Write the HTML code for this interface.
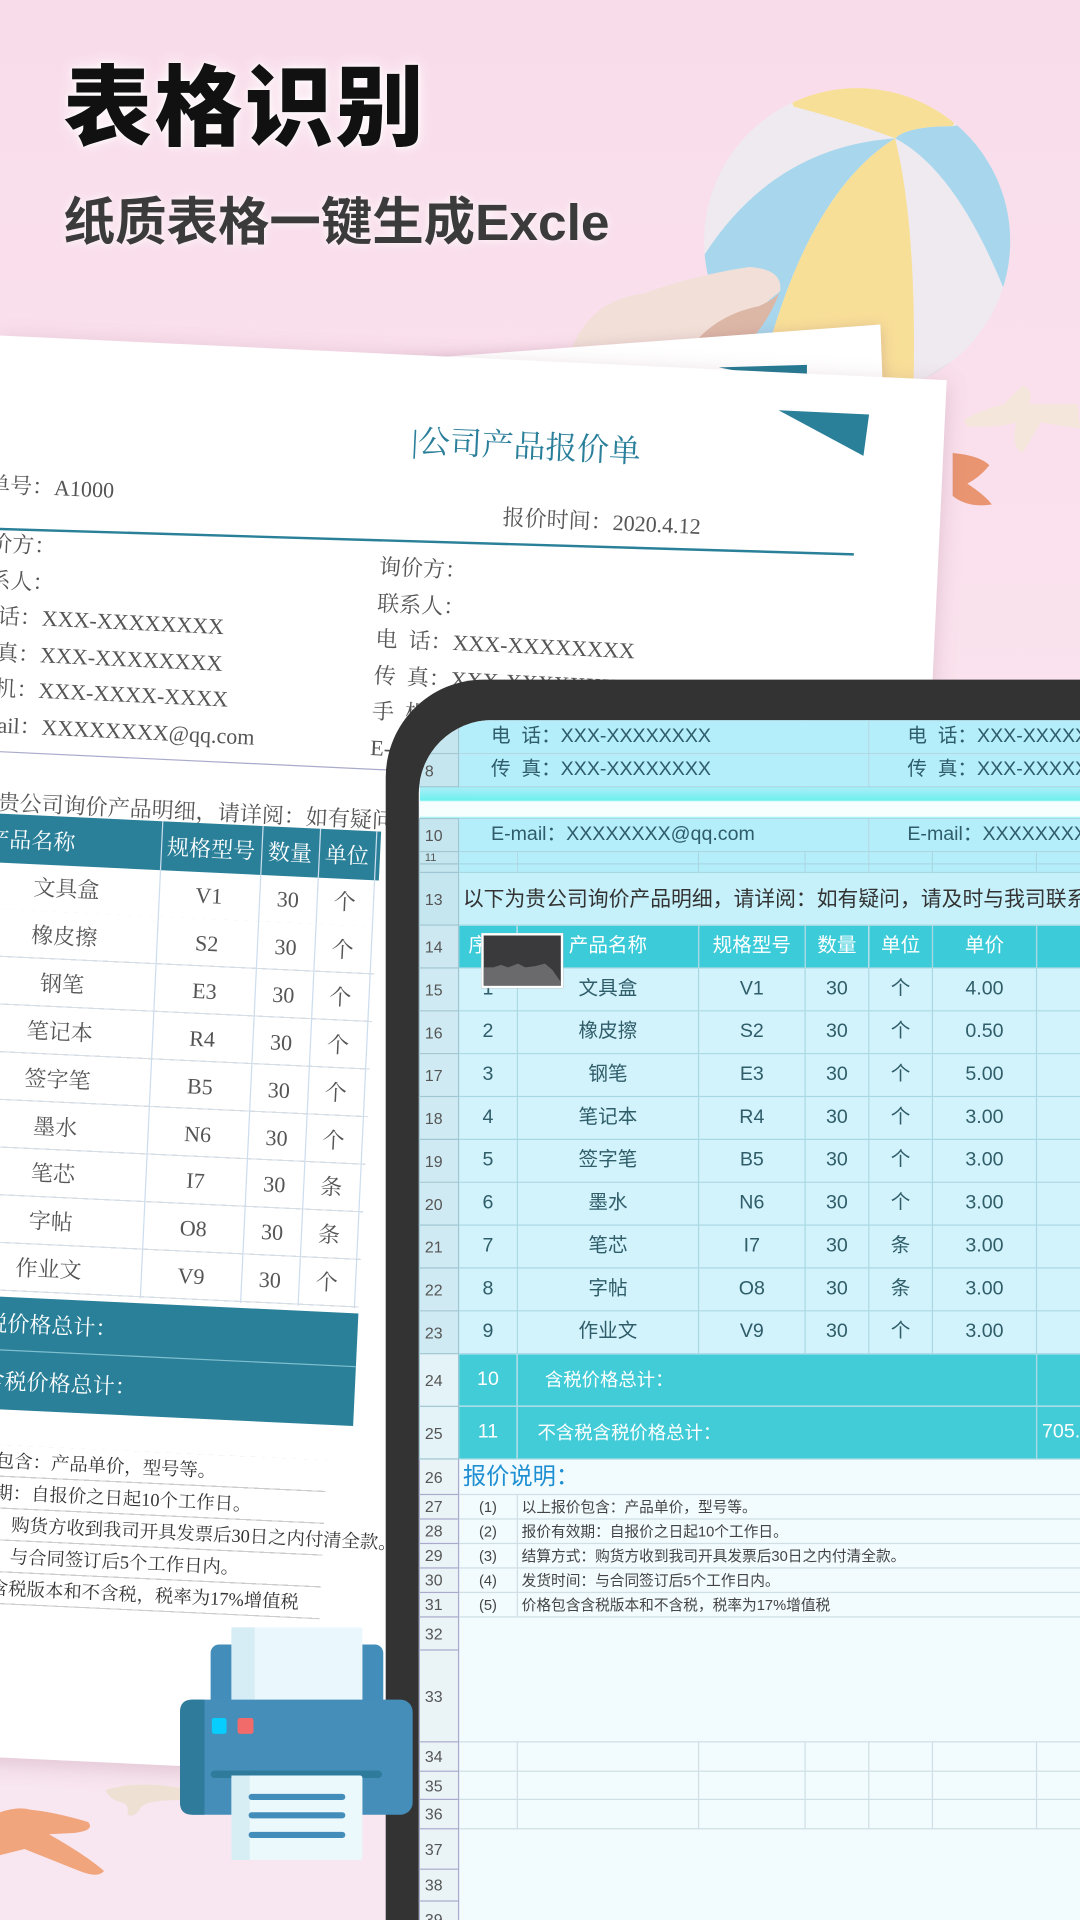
<!DOCTYPE html>
<html><head><meta charset="utf-8">
<style>
*{margin:0;padding:0;box-sizing:border-box}
html,body{width:1080px;height:1920px;overflow:hidden}
body{background:#f8e1ec}
#w{position:absolute;left:0;top:0;width:882px;height:1568px;transform:scale(1.22449);transform-origin:0 0;overflow:hidden;
background:linear-gradient(180deg,#f9dcea 0%,#fae3ee 40%,#f8e6f0 100%);font-family:"Liberation Sans","Noto Sans CJK SC",sans-serif}
.a{position:absolute}
.t1{left:52px;top:44px;font-size:72px;font-weight:900;color:#111;letter-spacing:2px;text-shadow:0 0 12px #fff,0 0 4px #fff;line-height:90px}
.t2{left:52px;top:152px;font-size:42px;font-weight:700;color:#3b3b3b;line-height:60px;text-shadow:0 0 8px #fff}
.paper{background:#fff;box-shadow:0 4px 18px rgba(150,90,120,.25)}
.ps{font-family:"Liberation Serif","Noto Serif CJK SC",serif;color:#555;font-size:18px;white-space:nowrap;line-height:22px}
#frame{left:315px;top:555px;width:720px;height:1013px;background:#333;border-radius:80px 80px 0 0}
#scr{left:342px;top:588px;width:540px;height:980px;border-radius:60px 0 0 0;overflow:hidden;background:#f2fbfe}
table{border-collapse:collapse;table-layout:fixed;width:620px;font-size:16px;color:#2f5d6a}
td{border:1px solid #a8d8e4;padding:0;white-space:nowrap;overflow:hidden;text-align:center;line-height:1}
td.n{background:#d3ecf3;color:#555;font-size:13px;text-align:left;padding-left:4px;border-color:#9fc6d2}
.cy td{background:#b4eefa}
.cy td.n{background:#c5e6ef}
.d td{background:#d2f3fb}
.d td.n{background:#cfeaf2}
.h td{background:#3ccbd8;color:#fff}
.h td.n{background:#cde8f0;color:#555}
.tt td{background:#42ccd7;color:#fff}
.tt td.n{background:#e4f3f7;color:#555}
.lo td{background:#f2fbfe;border-color:#cfdfe5;color:#444}
.lo td.n{background:#eaf4f7;color:#555;border-color:#aac}
.l{text-align:left}
</style></head><body><div id="w">

<svg class="a" style="left:0;top:0" width="882" height="440" viewBox="0 0 882 440">
<defs><clipPath id="bc"><circle cx="700" cy="197" r="125"/></clipPath></defs>
<circle cx="700" cy="197" r="125" fill="#efeaef"/>
<g clip-path="url(#bc)">
<path d="M731 113 Q631 120 574 210 L540 300 L631 340 L631 272 Q667 153 731 113Z" fill="#a8d7ed"/>
<path d="M731 113 Q667 153 631 272 L630 340 L746 340 L746 318 Q749 185 731 113Z" fill="#f8df98"/>
<path d="M731 113 Q741 103 778 103 L870 90 L870 260 L821 239 Q781 139 731 113Z" fill="#a8d7ed"/>
<path d="M731 113 Q700 101 648 87 L640 60 L800 60 L778 103 Q741 103 731 113Z" fill="#f8df98"/>
<path d="M746 318 Q760 300 830 270 L840 340 L740 340Z" fill="#e2dce6" opacity=".7"/>
</g>
<path d="M465 290 Q480 245 525 240 Q565 225 612 218 Q640 220 637 238 Q610 258 590 290Z" fill="#f2e0d8"/>
<path d="M560 290 Q580 258 620 250 Q635 243 637 238 Q625 270 600 290Z" fill="#dcb7a6"/>
<path d="M787 343 Q800 335 820 330 L835 315 Q845 318 840 330 L880 330 L882 350 L850 345 L835 370 Q825 365 830 345 Q810 350 790 348Z" fill="#f5e6dc"/>
<path d="M778 370 Q800 372 808 380 Q800 390 790 395 Q805 405 810 412 Q790 415 778 405Z" fill="#e99572"/>
</svg>

<div class="a t1">表格识别</div>
<div class="a t2">纸质表格一键生成Excle</div>

<svg class="a" style="left:0;top:0" width="882" height="600">
<polygon points="300,296 719,265 730,560 300,580" fill="#fff" style="filter:drop-shadow(0 2px 6px rgba(150,90,120,.3))"/>
<polygon points="587,300 659,298 659,314" fill="#227a93"/>
</svg>

<div class="a paper" style="left:0;top:274px;width:774px;height:1160px;transform:rotate(2.7deg);transform-origin:0 0">
  <div class="a ps" style="left:340px;top:56px;font-size:26px;color:#2a7f9a;line-height:30px">|公司产品报价单</div>
  <svg class="a" style="left:630px;top:24px" width="90" height="50"><polygon points="8,7 82,7 79,41" fill="#2a8099"/></svg>
  <div class="a ps" style="left:-40px;top:111px">报价单号：A1000</div>
  <div class="a ps" style="left:417px;top:118px">报价时间：2020.4.12</div>
  <div class="a" style="left:-20px;top:151px;width:725px;height:2px;background:#2a8099;transform:rotate(-1deg)"></div>
  <div class="a ps" style="left:-18px;top:156px;line-height:29.5px">询价方：<br>联系人：<br>电&nbsp;&nbsp;话：XXX-XXXXXXXX<br>传&nbsp;&nbsp;真：XXX-XXXXXXXX<br>手&nbsp;&nbsp;机：XXX-XXXX-XXXX<br>E-mail：XXXXXXXX@qq.com</div>
  <div class="a ps" style="left:318px;top:160px;line-height:29.5px">询价方：<br>联系人：<br>电&nbsp;&nbsp;话：XXX-XXXXXXXX<br>传&nbsp;&nbsp;真：XXX-XXXXXXXX<br>手&nbsp;&nbsp;机：XXX-XXXX-XXXX<br>E-mail：XXXXXXXX@qq.com</div>
  <div class="a" style="left:-20px;top:339px;width:360px;height:1px;background:#aac"></div>
  <div class="a ps" style="left:-38px;top:370px">以下为贵公司询价产品明细，请详阅：如有疑问，请及时与我司联系</div>
  <div class="a" style="left:-30px;top:390px;width:360px;height:40px;background:#2a8099"></div>
  <div class="a ps" style="left:-30px;top:400px;width:360px;color:#fff">
    <span class="a" style="left:30px;width:90px;text-align:center">产品名称</span>
    <span class="a" style="left:181px;width:82px;text-align:center">规格型号</span>
    <span class="a" style="left:263px;width:47px;text-align:center">数量</span>
    <span class="a" style="left:310px;width:46px;text-align:center">单位</span>
  </div>
  <div class="a" style="left:151px;top:390px;width:1px;height:390px;background:#cde"></div>
  <div class="a" style="left:233px;top:390px;width:1px;height:390px;background:#cde"></div>
  <div class="a" style="left:280px;top:390px;width:1px;height:390px;background:#cde"></div>
  <div class="a" style="left:326px;top:390px;width:1px;height:390px;background:#cde"></div>
  <div class="a ps" style="left:0;top:430px;width:330px;line-height:38.9px">
    <div class="a" style="left:0;width:151px;text-align:center">文具盒<br>橡皮擦<br>钢笔<br>笔记本<br>签字笔<br>墨水<br>笔芯<br>字帖<br>作业文</div>
    <div class="a" style="left:151px;width:82px;text-align:center">V1<br>S2<br>E3<br>R4<br>B5<br>N6<br>I7<br>O8<br>V9</div>
    <div class="a" style="left:233px;width:47px;text-align:center">30<br>30<br>30<br>30<br>30<br>30<br>30<br>30<br>30</div>
    <div class="a" style="left:280px;width:46px;text-align:center">个<br>个<br>个<br>个<br>个<br>个<br>条<br>条<br>个</div>
  </div>
  <div class="a" style="left:-30px;top:468px;width:360px;height:312px;background:repeating-linear-gradient(180deg,transparent 0,transparent 37.9px,#d5dde5 37.9px,#d5dde5 38.9px)"></div>
  <div class="a" style="left:-30px;top:784px;width:360px;height:92px;background:#2a8099"></div>
  <div class="a" style="left:-30px;top:827px;width:360px;height:1px;background:#7fc0d0"></div>
  <div class="a ps" style="left:-10px;top:795px;color:#fff">不含税价格总计：</div>
  <div class="a ps" style="left:-28px;top:842px;color:#fff">不含税含税价格总计：</div>
  <div class="a ps" style="left:-68px;top:878px;color:#2a8fc9;font-size:22px;line-height:26px">报价说明：</div>
  <div class="a ps" style="left:-20px;top:906px;font-size:15px;line-height:26px;color:#333">以上报价包含：产品单价，型号等。<br>报价有效期：自报价之日起10个工作日。<br>结算方式：购货方收到我司开具发票后30日之内付清全款。<br>发货时间：与合同签订后5个工作日内。<br>价格包含含税版本和不含税，税率为17%增值税</div>
  <div class="a" style="left:-20px;top:905px;width:330px;height:130px;background:repeating-linear-gradient(180deg,transparent 0,transparent 25px,#ccc 25px,#ccc 26px)"></div>
</div>

<svg class="a" style="left:0;top:1440px" width="160" height="100">
<path d="M86 22 Q110 14 147 20 L147 30 Q120 30 115 36 Q110 45 104 42 Q106 34 100 32 Q90 30 86 22Z" fill="#efe0d4"/>
<path d="M0 40 Q15 35 25 38 Q45 40 72 48 Q78 55 60 57 L40 58 Q70 75 85 88 Q80 94 65 88 Q40 78 20 70 L0 75Z" fill="#f0a57c"/>
</svg>

<div class="a" id="frame"></div>
<div class="a" id="scr">
<table>
<colgroup><col style="width:32px"><col style="width:48px"><col style="width:148px"><col style="width:87px"><col style="width:52px"><col style="width:52px"><col style="width:85px"><col style="width:116px"></colgroup>
<tr class="cy" style="height:27px"><td class="n"></td><td colspan="4" class="l" style="padding-left:26px">电&nbsp;&nbsp;话：XXX-XXXXXXXX</td><td colspan="3" class="l" style="padding-left:31px">电&nbsp;&nbsp;话：XXX-XXXXXXXX</td></tr>
<tr class="cy" style="height:27px"><td class="n">8</td><td colspan="4" class="l" style="padding-left:26px">传&nbsp;&nbsp;真：XXX-XXXXXXXX</td><td colspan="3" class="l" style="padding-left:31px">传&nbsp;&nbsp;真：XXX-XXXXXXXX</td></tr>
<tr style="height:26px"><td colspan="8" style="border:0;background:linear-gradient(180deg,#a8eef8 0%,#6ff0ee 40%,#f6fffe 45%,#f6fffe 92%,#6ff0ee 100%)"></td></tr>
<tr class="cy" style="height:27px"><td class="n">10</td><td colspan="4" class="l" style="padding-left:26px">E-mail：XXXXXXXX@qq.com</td><td colspan="3" class="l" style="padding-left:31px">E-mail：XXXXXXXX@qq.com</td></tr>
<tr class="cy" style="height:8px"><td class="n" style="font-size:9px">11</td><td></td><td></td><td></td><td></td><td></td><td></td><td></td></tr>
<tr class="cy" style="height:7px"><td class="n"></td><td></td><td></td><td></td><td></td><td></td><td></td><td></td></tr>
<tr class="cy" style="height:43px"><td class="n">13</td><td colspan="7" class="l" style="padding-left:3px;font-size:17px;color:#333;background:#c6f1fa">以下为贵公司询价产品明细，请详阅：如有疑问，请及时与我司联系，谢谢！</td></tr>
<tr class="h" style="height:35px"><td class="n">14</td><td>序号</td><td>产品名称</td><td>规格型号</td><td>数量</td><td>单位</td><td>单价</td><td></td></tr>
<tr class="d" style="height:35px"><td class="n">15</td><td>1</td><td>文具盒</td><td>V1</td><td>30</td><td>个</td><td>4.00</td><td></td></tr>
<tr class="d" style="height:35px"><td class="n">16</td><td>2</td><td>橡皮擦</td><td>S2</td><td>30</td><td>个</td><td>0.50</td><td></td></tr>
<tr class="d" style="height:35px"><td class="n">17</td><td>3</td><td>钢笔</td><td>E3</td><td>30</td><td>个</td><td>5.00</td><td></td></tr>
<tr class="d" style="height:35px"><td class="n">18</td><td>4</td><td>笔记本</td><td>R4</td><td>30</td><td>个</td><td>3.00</td><td></td></tr>
<tr class="d" style="height:35px"><td class="n">19</td><td>5</td><td>签字笔</td><td>B5</td><td>30</td><td>个</td><td>3.00</td><td></td></tr>
<tr class="d" style="height:35px"><td class="n">20</td><td>6</td><td>墨水</td><td>N6</td><td>30</td><td>个</td><td>3.00</td><td></td></tr>
<tr class="d" style="height:35px"><td class="n">21</td><td>7</td><td>笔芯</td><td>I7</td><td>30</td><td>条</td><td>3.00</td><td></td></tr>
<tr class="d" style="height:35px"><td class="n">22</td><td>8</td><td>字帖</td><td>O8</td><td>30</td><td>条</td><td>3.00</td><td></td></tr>
<tr class="d" style="height:35px"><td class="n">23</td><td>9</td><td>作业文</td><td>V9</td><td>30</td><td>个</td><td>3.00</td><td></td></tr>
<tr class="tt" style="height:43px"><td class="n">24</td><td>10</td><td colspan="5" class="l" style="padding-left:22px;font-size:15px">含税价格总计：</td><td></td></tr>
<tr class="tt" style="height:43px"><td class="n">25</td><td>11</td><td colspan="5" class="l" style="padding-left:16px;font-size:15px">不含税含税价格总计：</td><td class="l" style="padding-left:4px">705.</td></tr>
<tr class="lo" style="height:29px"><td class="n">26</td><td colspan="7" class="l" style="padding-left:3px;font-size:19px;color:#1d8fd2">报价说明：</td></tr>
<tr class="lo" style="height:20px"><td class="n">27</td><td style="font-size:12px">(1)</td><td colspan="6" class="l" style="padding-left:3px;font-size:12px">以上报价包含：产品单价，型号等。</td></tr>
<tr class="lo" style="height:20px"><td class="n">28</td><td style="font-size:12px">(2)</td><td colspan="6" class="l" style="padding-left:3px;font-size:12px">报价有效期：自报价之日起10个工作日。</td></tr>
<tr class="lo" style="height:20px"><td class="n">29</td><td style="font-size:12px">(3)</td><td colspan="6" class="l" style="padding-left:3px;font-size:12px">结算方式：购货方收到我司开具发票后30日之内付清全款。</td></tr>
<tr class="lo" style="height:20px"><td class="n">30</td><td style="font-size:12px">(4)</td><td colspan="6" class="l" style="padding-left:3px;font-size:12px">发货时间：与合同签订后5个工作日内。</td></tr>
<tr class="lo" style="height:20px"><td class="n">31</td><td style="font-size:12px">(5)</td><td colspan="6" class="l" style="padding-left:3px;font-size:12px">价格包含含税版本和不含税，税率为17%增值税</td></tr>
<tr class="lo" style="height:27px"><td class="n">32</td><td colspan="7" style="border-bottom:0"></td></tr>
<tr class="lo" style="height:75px"><td class="n">33</td><td colspan="7" style="border-top:0"></td></tr>
<tr class="lo" style="height:24px"><td class="n">34</td><td></td><td></td><td></td><td></td><td></td><td></td><td></td></tr>
<tr class="lo" style="height:23px"><td class="n">35</td><td></td><td></td><td></td><td></td><td></td><td></td><td></td></tr>
<tr class="lo" style="height:24px"><td class="n">36</td><td></td><td></td><td></td><td></td><td></td><td></td><td></td></tr>
<tr class="lo" style="height:33px"><td class="n">37</td><td colspan="7" style="border-bottom:0"></td></tr>
<tr class="lo" style="height:26px"><td class="n">38</td><td colspan="7" style="border:0"></td></tr>
<tr class="lo" style="height:30px"><td class="n">39</td><td colspan="7" style="border:0"></td></tr>
</table>
<div class="a" style="left:51px;top:174px;width:67px;height:45px;background:#3a393c;border:2px solid #fff">
  <svg width="63" height="41" style="position:absolute;left:0;top:0"><path d="M0 26 L8 26 L14 24 L20 26 L28 23 L34 26 L42 25 L50 23 L56 28 L63 38 L63 41 L0 41Z" fill="#6a6a6c"/></svg>
</div>
</div>

<svg class="a" style="left:140px;top:1320px" width="210" height="210" viewBox="140 1320 210 210">
<rect x="172" y="1343" width="141" height="52" rx="7" fill="#428dba"/>
<rect x="189" y="1329" width="107" height="66" rx="2" fill="#eaf7fc"/>
<rect x="189" y="1329" width="19" height="66" fill="#d6edf5"/>
<rect x="147" y="1388" width="190" height="94" rx="10" fill="#458eba"/>
<path d="M157 1388 L167 1388 L167 1482 L157 1482 Q147 1482 147 1472 L147 1398 Q147 1388 157 1388Z" fill="#2f7b9c"/>
<rect x="172" y="1446" width="140" height="6" rx="3" fill="#2f7b9c"/>
<rect x="173" y="1403" width="12" height="13" rx="2" fill="#06cfff"/>
<rect x="194" y="1403" width="13" height="13" rx="2" fill="#f26b6b"/>
<rect x="189" y="1450" width="107" height="69" rx="2" fill="#ebf8fc"/>
<rect x="189" y="1450" width="15" height="69" fill="#d8eef5"/>
<rect x="203" y="1465" width="79" height="5" rx="2.5" fill="#428dba"/>
<rect x="203" y="1480" width="79" height="5" rx="2.5" fill="#428dba"/>
<rect x="203" y="1496" width="79" height="5" rx="2.5" fill="#428dba"/>
</svg>

</div></body></html>
